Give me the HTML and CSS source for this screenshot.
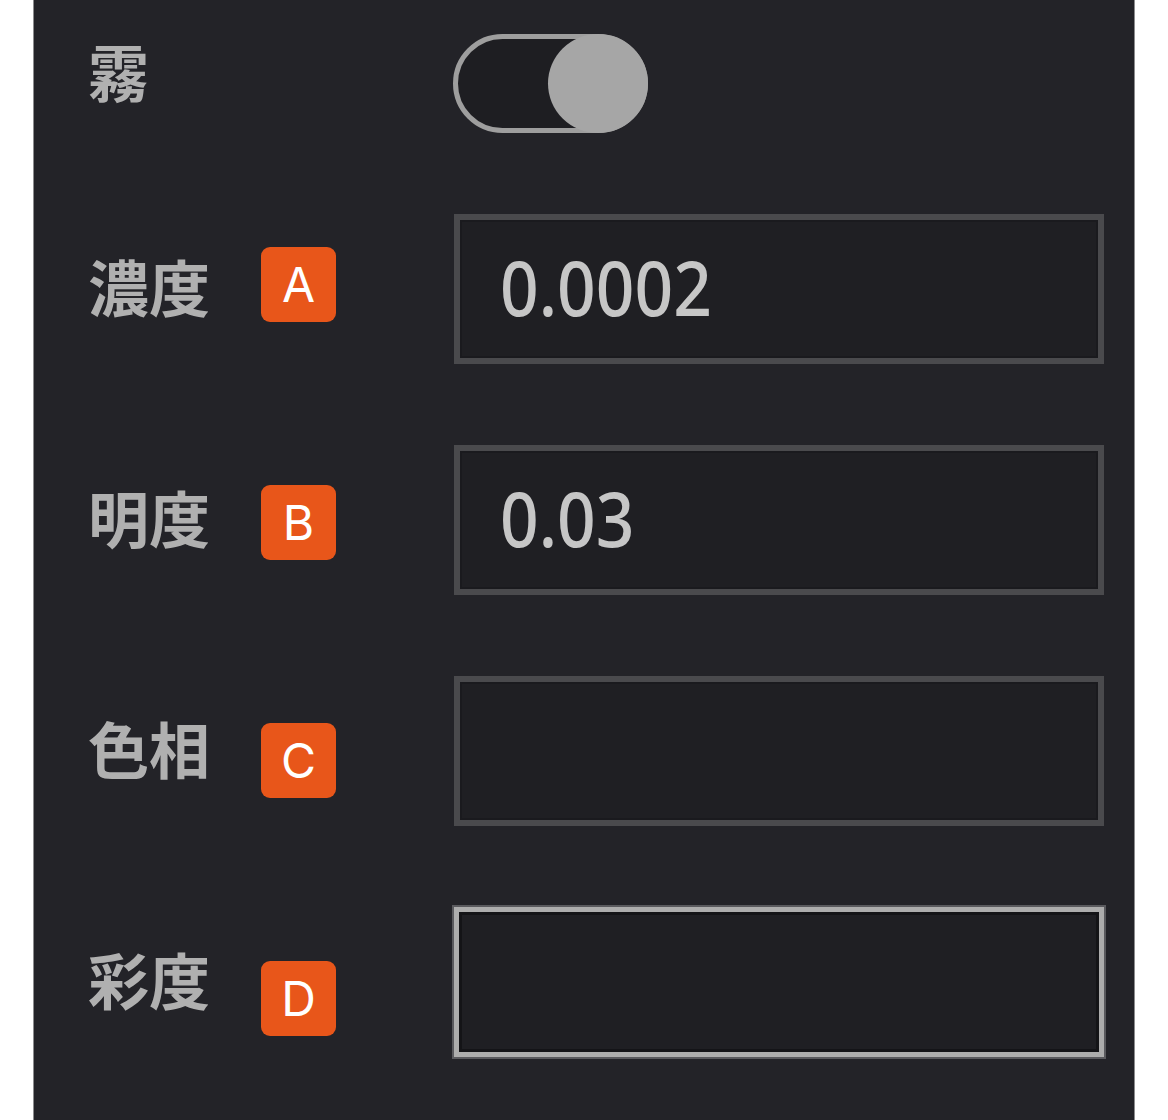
FILE: index.html
```html
<!DOCTYPE html>
<html lang="ja">
<head>
<meta charset="utf-8">
<title>霧</title>
<link rel="stylesheet" href="styles.css">
</head>
<body>
<div class="panel">
  <div class="label label-fog">霧</div>
  <div class="toggle"><span class="knob"></span></div>

  <div class="label">濃度</div>
  <div class="field"><span class="value">0.0002</span></div>

  <div class="label">明度</div>
  <div class="field"><span class="value">0.03</span></div>

  <div class="label">色相</div>
  <div class="field"></div>

  <div class="label">彩度</div>
  <div class="field field-focus"></div>

  <span class="badge badge-a">A</span>
  <span class="badge badge-b">B</span>
  <span class="badge badge-c">C</span>
  <span class="badge badge-d">D</span>
</div>
</body>
</html>
```

FILE: styles.css
```css
html, body {
  margin: 0;
  padding: 0;
  background: #ffffff;
}

.panel {
  position: relative;
  box-sizing: border-box;
  margin-left: 33px;
  width: 1102px;
  height: 1120px;
  background: #232328;
  border-left: 1px solid #8c8c8e;
  border-right: 1px solid #8c8c8e;
  padding: 33px 30px 0 54px;
  display: grid;
  grid-template-columns: 366px 650px;
  grid-template-rows: 100px 150px 150px 150px 150px;
  row-gap: 81px;
  align-items: center;
}

.label {
  font-family: "Noto Sans CJK JP", "Noto Sans CJK SC", sans-serif;
  font-weight: 700;
  font-size: 61px;
  line-height: 1;
  color: #b0b0b0;
  margin-bottom: 8px;
}

.label-fog {
  margin-bottom: 26px;
}

.toggle {
  position: relative;
  box-sizing: border-box;
  width: 195px;
  height: 99px;
  border: 5px solid #9e9e9e;
  border-radius: 50px;
  background: #1e1e22;
  justify-self: start;
  margin-left: -1px;
}

.knob {
  position: absolute;
  top: -5px;
  right: -5px;
  width: 100px;
  height: 99px;
  border-radius: 50%;
  background: #a6a6a6;
}

.field {
  box-sizing: border-box;
  height: 150px;
  border: 6px solid #4a4a4d;
  box-shadow: inset 0 0 0 2px #1a1a1e;
  background: #1f1f23;
  display: flex;
  align-items: center;
  padding: 0 0 4px 40px;
}

.field-focus {
  border: 5px solid #adadad;
  box-shadow: 0 0 0 2px #5a5a5e, inset 0 0 0 3px #141417;
}

.value {
  font-family: "Noto Sans", "DejaVu Sans", sans-serif;
  font-weight: 500;
  font-size: 76px;
  line-height: 1;
  color: #c6c6c6;
  transform: scaleX(0.89);
  transform-origin: left center;
}

.badge {
  position: absolute;
  left: 227px;
  width: 75px;
  height: 75px;
  border-radius: 9px;
  background: #e8561a;
  color: #ffffff;
  font-family: "Inter", "Roboto", sans-serif;
  font-size: 48px;
  line-height: 75px;
  text-align: center;
}

.badge-a { top: 247px; }
.badge-b { top: 485px; }
.badge-c { top: 723px; }
.badge-d { top: 961px; }
```
